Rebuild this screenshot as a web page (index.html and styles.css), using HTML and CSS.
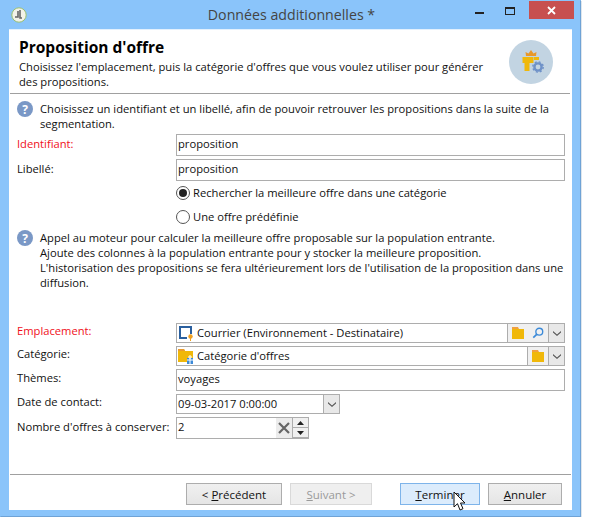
FILE: index.html
```html
<!DOCTYPE html>
<html lang="fr">
<head>
  <meta charset="UTF-8" />
  <title>Données additionnelles</title>
  <link rel="stylesheet" href="styles.css">
</head>
<body>
  <div class="window">
    <div class="titlebar">
      <svg class="app-icon" width="16" height="16" viewBox="0 0 16 16">
        <circle cx="8" cy="8" r="7.2" fill="#f2f2e8" stroke="#9cc070" />
        <path d="M7 4v6h-3M9 3v8h2" fill="none" stroke="#666" stroke-width="1.6" />
      </svg>
      <span class="title">Données additionnelles *</span>
      <div class="winbtns">
        <svg class="minimize" width="9" height="3"><rect width="9" height="2" y="1" fill="#222" /></svg>
        <svg class="maximize" width="11" height="9"><rect x=".5" y=".5" width="9" height="7" fill="none" stroke="#222" /><rect width="10" height="2" fill="#222" /></svg>
        <div class="close">
          <svg width="9" height="9" viewBox="0 0 9 9"><path d="M1 1l7 7M8 1l-7 7" stroke="#fff" stroke-width="1.8" /></svg>
        </div>
      </div>
    </div>

    <div class="content">
      <div class="head">
        <div class="head-text">
          <h1>Proposition d'offre</h1>
          <p>Choisissez l'emplacement, puis la catégorie d'offres que vous voulez utiliser pour générer des propositions.</p>
        </div>
        <div class="head-icon">
          <svg width="26" height="24" viewBox="0 0 26 24">
            <path d="M8 6L7.500 2l3 1.500L13 0l2.500 3.500 3-1.500-.5 4z" fill="#e8982a" />
            <path d="M4.500 7h11v6h-4v8h-5v-8h-2z" fill="#f0b80a" />
            <path d="M16 7h5v3h-5z" fill="#f0b80a" />
            <circle cx="20" cy="17" r="3.600" fill="none" stroke="#6f92c8" stroke-width="2.400" />
            <circle cx="20" cy="17" r="5.200" fill="none" stroke="#6f92c8" stroke-width="1.400" stroke-dasharray="2 2.100" />
          </svg>
        </div>
      </div>

      <div class="info info-first">
        <span class="help">?</span>
        <p>Choisissez un identifiant et un libellé, afin de pouvoir retrouver les propositions dans la suite de la segmentation.</p>
      </div>

      <div class="row row-first">
        <label class="required">Identifiant:</label>
        <div class="field">proposition</div>
      </div>
      <div class="row">
        <label>Libellé:</label>
        <div class="field">proposition</div>
      </div>

      <div class="radios">
        <div class="radio"><span class="dot checked"></span>Rechercher la meilleure offre dans une catégorie</div>
        <div class="radio"><span class="dot"></span>Une offre prédéfinie</div>
      </div>

      <div class="info info-second">
        <span class="help">?</span>
        <p>Appel au moteur pour calculer la meilleure offre proposable sur la population entrante.<br>
        Ajoute des colonnes à la population entrante pour y stocker la meilleure proposition.<br>
        L'historisation des propositions se fera ultérieurement lors de l'utilisation de la proposition dans une diffusion.</p>
      </div>

      <div class="row row-place row-raised">
        <label class="required">Emplacement:</label>
        <div class="combo">
          <div class="field field-icon">
            <svg width="16" height="16" viewBox="0 0 16 16">
              <path d="M13 9V2H2v11h7" fill="#fff" stroke="#2a5f9e" stroke-width="2" />
              <circle cx="12.500" cy="11.500" r="2.200" fill="#f0a020" />
              <path d="M12 13h1v3h-1z" fill="#f0a020" />
            </svg>
            Courrier (Environnement - Destinataire)
          </div>
          <div class="tools">
            <svg width="12" height="12"><use href="#folder" /></svg>
            <svg width="12" height="12" viewBox="0 0 14 14"><circle cx="8.500" cy="5.500" r="4" fill="none" stroke="#3c8ad8" stroke-width="1.600" /><path d="M5.500 8.500L1.500 12.500" stroke="#3c8ad8" stroke-width="2" /></svg>
          </div>
          <div class="drop"><svg width="8" height="6"><use href="#chev" /></svg></div>
        </div>
      </div>
      <div class="row row-raised">
        <label>Catégorie:</label>
        <div class="combo">
          <div class="field field-icon">
            <svg width="16" height="16" viewBox="0 0 16 16">
              <path d="M0 1h6l1 2h8v11H0z" fill="#f0b80a" />
              <path d="M0 1h6l1 2H0z" fill="#e89a30" />
              <path d="M9 10h6v6H9z" fill="#3c8ad8" />
              <path d="M11 8h2v2h-2zM9 12h6M12 10v6" fill="none" stroke="#fff" />
            </svg>
            Catégorie d'offres
          </div>
          <div class="tools">
            <svg width="12" height="12"><use href="#folder" /></svg>
          </div>
          <div class="drop"><svg width="8" height="6"><use href="#chev" /></svg></div>
        </div>
      </div>
      <div class="row row-level">
        <label>Thèmes:</label>
        <div class="field">voyages</div>
      </div>
      <div class="row row-raised">
        <label>Date de contact:</label>
        <div class="combo combo-date">
          <div class="field">09-03-2017 0:00:00</div>
          <div class="drop"><svg width="8" height="6"><use href="#chev" /></svg></div>
        </div>
      </div>
      <div class="row">
        <label>Nombre d'offres à conserver:</label>
        <div class="combo combo-number">
          <div class="field">2</div>
          <div class="clear"><svg width="12" height="12" viewBox="0 0 12 12"><path d="M1 1l10 10M11 1L1 11" stroke="#666" stroke-width="2.200" /></svg></div>
          <div class="spin">
            <span><svg width="7" height="4"><path d="M3.500 0L7 4H0z" fill="#222" /></svg></span>
            <span><svg width="7" height="4"><path d="M0 0h7L3.500 4z" fill="#222" /></svg></span>
          </div>
        </div>
      </div>

      <div class="footer">
        <button class="btn btn-prev">&lt; <u>P</u>récédent</button>
        <button class="btn btn-next" disabled><u>S</u>uivant &gt;</button>
        <button class="btn btn-finish"><u>T</u>erminer</button>
        <button class="btn btn-cancel"><u>A</u>nnuler</button>
      </div>
    </div>

    <svg class="cursor" width="14" height="21" viewBox="0 0 14 21">
      <path d="M1 1v15l3.500-3.300L7 19l3-1.300-2.500-5.700H12z" fill="#fff" stroke="#111" />
    </svg>
  </div>

  <svg class="defs" width="0" height="0">
    <defs>
      <g id="folder">
        <path d="M0 0h6l1 2H0z" fill="#f0a040" />
        <path d="M0 2h12v10H0z" fill="#f0b80a" />
      </g>
      <path id="chev" d="M0 1l4 3.500L8 1v1.500L4 6 0 2.500z" fill="#555" />
    </defs>
  </svg>
</body>
</html>
```

FILE: styles.css
```css
body {
  margin: 0;
  background: #fff;
  font-family: "Open Sans", "Noto Sans", sans-serif;
  font-size: 11.2px;
  color: #111;
}

.window {
  position: relative;
  width: 579px;
  height: 515px;
  background: #8ac4fa;
  border: 1px solid #6fa3d6;
  border-left-color: #8ac4fa;
  border-top-color: #8ac4fa;
  box-shadow: 1px 1px 0 #dfe6ec;
}

.titlebar {
  display: flex;
  align-items: center;
  height: 28px;
}

.app-icon {
  margin-left: 10px;
}

.title {
  flex: 1;
  text-align: center;
  font-size: 14.2px;
  color: #444;
  padding-left: 81px;
  padding-bottom: 1px;
}

.winbtns {
  display: flex;
  align-self: flex-start;
  align-items: flex-start;
}

.minimize {
  margin: 10px 21px 0 0;
}

.maximize {
  margin: 6px 13px 0 0;
}

.close {
  display: flex;
  align-items: center;
  justify-content: center;
  width: 45px;
  height: 18px;
  background: #c75050;
  margin-right: 6px;
}

.content {
  display: flex;
  flex-direction: column;
  height: 480px;
  margin: 0 8px;
  background: #fff;
  border-top: 1px solid #e2f0fd;
}

.head {
  display: flex;
  height: 63px;
  margin: 0 2px 0 1px;
  padding-left: 9px;
  border-bottom: 1px solid #a0a0a0;
}

.head-text {
  width: 478px;
}

h1 {
  margin: 8px 0 0;
  font-size: 15.5px;
  line-height: 19px;
  font-weight: 700;
  color: #000;
}

.head-text p {
  margin: 2px 0 0;
  line-height: 15px;
}

.head-icon {
  display: flex;
  align-items: center;
  justify-content: center;
  width: 44px;
  height: 44px;
  margin: 10px 0 0 12px;
  border-radius: 50%;
  background: #c2d4e2;
}

.info {
  display: flex;
  padding: 0 7px 0 8px;
}

.info-first {
  margin-top: 7px;
}

.info-second {
  margin-top: 1px;
}

.info p {
  flex: 1;
  margin: 0;
  line-height: 15px;
}

.help {
  display: flex;
  flex: none;
  align-items: center;
  justify-content: center;
  width: 16px;
  height: 16px;
  margin-right: 7px;
  border-radius: 50%;
  background: #7a98c6;
  color: #fff;
  font-weight: 700;
  font-size: 12px;
}

.row {
  display: flex;
  align-items: flex-start;
  margin: 3px 7px 0 8px;
}

.row-first {
  margin-top: 3px;
}

.row-place {
  margin-top: 33px;
}

.row label {
  flex: none;
  width: 159px;
  line-height: 17px;
  padding-top: 1px;
}

.row-level label {
  padding-top: 0;
}

.row-raised label {
  padding-top: 0;
  margin-top: -1px;
}

.required {
  color: #f0101c;
}

.field {
  flex: 1;
  min-width: 0;
  height: 20px;
  line-height: 18px;
  padding-left: 1px;
  border: 1px solid #adadad;
  white-space: nowrap;
  background: #fff;
}

.field-icon {
  display: flex;
  align-items: center;
  gap: 3px;
  height: 18px;
}

.combo {
  flex: 1;
  display: flex;
  height: 20px;
}

.tools {
  display: flex;
  align-items: center;
  gap: 8px;
  padding: 0 4px;
  height: 18px;
  background: #f0f0f0;
  border-top: 1px solid #adadad;
  border-bottom: 1px solid #adadad;
}

.drop {
  display: flex;
  align-items: center;
  justify-content: center;
  width: 15px;
  height: 18px;
  background: #e8e8e8;
  border: 1px solid #adadad;
}

.combo-date {
  flex: none;
  width: 164px;
}

.combo-date .field {
  height: 18px;
  border-right: 0;
}

.combo-number {
  flex: none;
  width: 133px;
  height: 22px;
  border: 1px solid #adadad;
  box-sizing: border-box;
}

.combo-number .field {
  height: 20px;
  border: 0;
}

.clear {
  display: flex;
  align-items: center;
  justify-content: center;
  width: 16px;
  background: #ececec;
}

.spin {
  display: flex;
  flex-direction: column;
  width: 15px;
  border-left: 1px solid #adadad;
}

.spin span {
  flex: 1;
  display: flex;
  align-items: center;
  justify-content: center;
  background: #f0f0f0;
  border-bottom: 1px solid #adadad;
}

.radios {
  margin-left: 167px;
}

.radio {
  display: flex;
  align-items: center;
  height: 24px;
  padding-bottom: 1px;
  box-sizing: border-box;
}

.dot {
  display: flex;
  align-items: center;
  justify-content: center;
  width: 12px;
  height: 12px;
  margin-right: 3px;
  border: 1px solid #555;
  border-radius: 50%;
  background: #fff;
}

.dot.checked::after {
  content: "";
  width: 8px;
  height: 8px;
  border-radius: 50%;
  background: #222;
}

.footer {
  display: flex;
  height: 22px;
  margin: auto 1px 0 1px;
  padding: 8px 9px 5px 176px;
  border-top: 1px solid #a0a0a0;
}

.btn {
  height: 22px;
  padding: 0;
  border: 1px solid #adadad;
  background: linear-gradient(#f0f0f0, #e5e5e5);
  font: inherit;
  font-size: 11.5px;
  color: #111;
}

.btn-prev {
  width: 96px;
  margin-right: 8px;
}

.btn-next {
  width: 82px;
  margin-right: 28px;
  color: #9a9a9a;
  border-color: #d9d9d9;
  background: #efefef;
}

.btn-finish {
  width: 80px;
  margin-right: 8px;
  border-color: #7eb4ea;
  background: #dcecfc;
}

.btn-cancel {
  width: 74px;
}

.cursor {
  position: absolute;
  left: 452px;
  top: 490px;
}

.defs {
  position: absolute;
}
```
